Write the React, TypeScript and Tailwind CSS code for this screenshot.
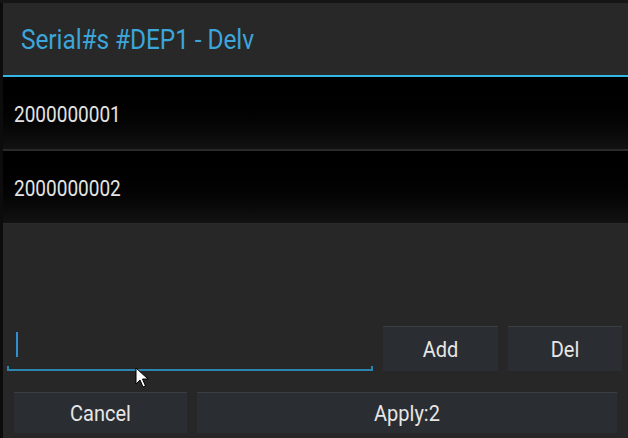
import React from 'react';

const serials = ['2000000001', '2000000002'];

const DialogButton: React.FC<{ label: string; className: string }> = ({ label, className }) => (
  <button
    className={`flex items-center justify-center bg-[#2a2d31] border-t border-[#3a3d41] text-[#e6e6e6] ${className}`}
  >
    <span className="inline-block text-[20px] scale-y-[1.12]">{label}</span>
  </button>
);

const App: React.FC = () => {
  return (
    <div
      className="relative w-[628px] h-[438px] overflow-hidden bg-[#0c0c0c] flex flex-col"
      style={{ fontFamily: 'Roboto, "Noto Sans", sans-serif' }}
    >
      {/* strip of the screen behind the dialog */}
      <div className="h-[3px] bg-[#151515]" />

      <div className="ml-[3px] flex-1 flex flex-col">
        {/* Title */}
        <div className="h-[72px] bg-[#282828] flex items-center pl-[18px] pt-[2px]">
          <span className="inline-block text-[24.5px] text-[#3ca5da] tracking-[-0.1px] scale-y-[1.12]">
            Serial#s #DEP1 - Delv
          </span>
        </div>
        <div className="h-[2px] bg-[#33b5e5]" />

        {/* Serial list */}
        <div className="flex flex-col">
          {serials.map((s, i) => (
            <React.Fragment key={s}>
              <div className="h-[72px] flex items-center pl-[11px] pt-[4px] bg-gradient-to-b from-[#000000] to-[#121212]">
                <span className="inline-block text-[19px] text-[#e4e4e4] scale-y-[1.15]">{s}</span>
              </div>
              <div className={i === 0 ? 'h-[2px] bg-[#2a2a2a]' : 'h-[1px] bg-[#2a2a2a]'} />
            </React.Fragment>
          ))}
        </div>

        {/* Entry + actions */}
        <div className="flex-1 bg-[#272727] flex flex-col justify-end pb-[5px]">
          <div className="flex items-end pl-[4px] pr-[6px]">
            <div className="relative w-[366px] h-[48px]">
              <div className="absolute left-[9px] top-[8px] w-[2px] h-[25px] bg-[#2f8fd0]" />
              <div className="absolute left-0 right-0 bottom-[1px] h-[2px] bg-[#2a86b0]" />
              <div className="absolute left-0 bottom-[1px] w-[2px] h-[5px] bg-[#2a86b0]" />
              <div className="absolute right-0 bottom-[1px] w-[2px] h-[5px] bg-[#2a86b0]" />
            </div>
            <div className="flex gap-[10px] ml-[10px] mb-[1px]">
              <DialogButton label="Add" className="w-[115px] h-[45px]" />
              <DialogButton label="Del" className="w-[114px] h-[45px]" />
            </div>
          </div>
          <div className="flex gap-[10px] pl-[11px] mt-[20px]">
            <DialogButton label="Cancel" className="w-[173px] h-[41px]" />
            <DialogButton label="Apply:2" className="w-[420px] h-[41px]" />
          </div>
        </div>
      </div>

      {/* mouse pointer */}
      <svg className="absolute left-[135px] top-[367px]" width="14" height="22" viewBox="0 0 14 22">
        <path d="M1 1 L1 17 L5 13 L8 20 L10.5 19 L7.5 12 L13 12 Z" fill="#ffffff" stroke="#000000" strokeWidth="1" />
      </svg>
    </div>
  );
};

export default App;
